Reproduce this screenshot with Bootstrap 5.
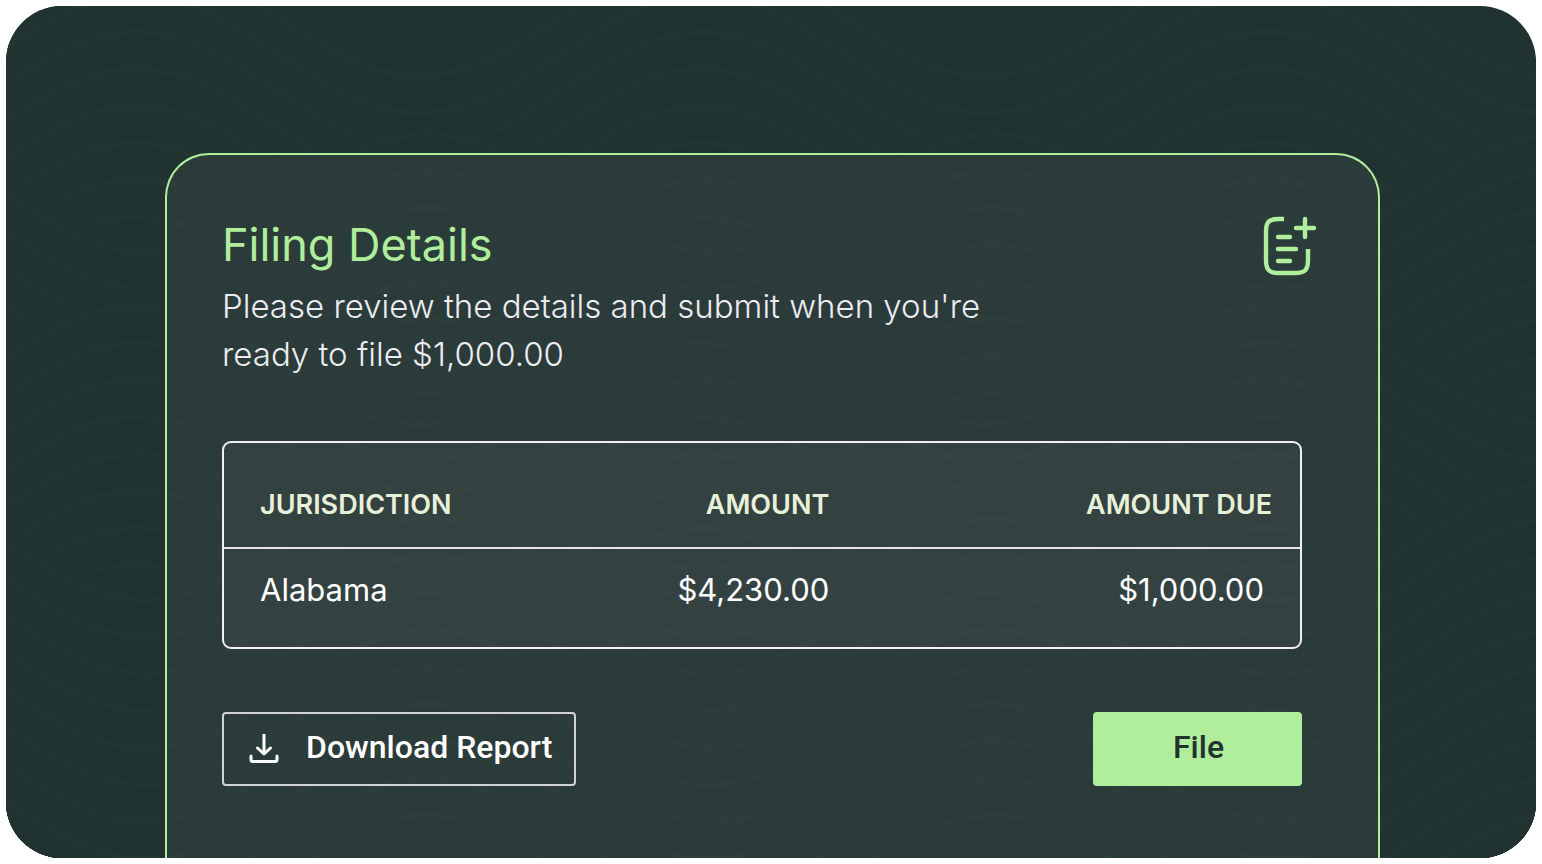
<!DOCTYPE html>
<html lang="en">
<head>
<meta charset="utf-8">
<meta name="viewport" content="width=device-width, initial-scale=1">
<title>Filing Details</title>
<link rel="stylesheet" href="https://cdn.jsdelivr.net/npm/bootstrap@5.3.0/dist/css/bootstrap.min.css">
<style>
  :root { --mint: #b0ee9c; --pine: #213331; }
  body { background: #fff; font-family: Inter, sans-serif; color: #fff; }
  .stage { min-height: calc(100vh - 12px); margin: 6px; padding: 147px 156px 0 159px; border-radius: 56px; background: var(--pine); }
  .waves { inset: 0; }
  .waves .ground { fill: var(--pine); }
  .waves .lines { fill: none; stroke: #233533; stroke-width: 7; }
  .filing { background: rgba(108, 112, 111, .14); border: 2px solid var(--mint); border-bottom: 0; border-radius: 44px 44px 0 0; }
  .filing-head { padding: 59px 60px 0 55px; }
  .filing-main { padding: 63px 76px 64px 55px; }
  .filing-title { margin-bottom: 6px; font-size: 45px; line-height: 62px; color: var(--mint); }
  .filing-note { max-width: 780px; font-size: 33px; line-height: 48px; font-weight: 300; color: #ececf2; }
  .frame { border: 2px solid #f1eff5; border-radius: 9px; background: rgba(255, 255, 255, .04); }
  .sums { table-layout: fixed; }
  .sums th, .sums td { padding: 0 8px 0 36px; }
  .sums th { padding-top: 45px; padding-bottom: 25px; border-bottom: 2px solid #e6e3ec; font-size: 27px; line-height: 34px; font-weight: 600; color: #e9f0da; }
  .sums td { padding-top: 21px; padding-bottom: 37px; font-size: 31px; line-height: 40px; }
  .sums th:last-child { padding-right: 28px; }
  .sums td:last-child { padding-right: 36px; }
  .col-place { width: 28%; }
  .col-sum { width: 29%; }
  .actions { margin-top: 63px; }
  .act { --bs-btn-border-radius: 4px; --bs-btn-border-width: 2px; height: 74px; padding: 0 22px 4px 24px; font-family: Roboto, sans-serif; font-size: 32px; line-height: 40px; font-weight: 500; }
  .act-download { --bs-btn-color: #fff; --bs-btn-border-color: #d0d2d8; --bs-btn-hover-color: #fff; --bs-btn-hover-border-color: #fff; gap: 26px; }
  .act-file { --bs-btn-color: var(--pine); --bs-btn-bg: var(--mint); --bs-btn-border-color: var(--mint); --bs-btn-hover-bg: #c1f5b0; min-width: 209px; }
  @media (max-width: 1100px) {
    .stage { padding: 48px 24px 0; }
    .filing-head, .filing-main { padding-left: 24px; padding-right: 24px; }
    .sums th, .sums td { padding-left: 12px; }
  }
</style>
</head>
<body>
<main class="stage position-relative overflow-hidden d-flex flex-column">
  <svg class="waves position-absolute w-100 h-100" viewBox="6 6 1530 852" preserveAspectRatio="xMidYMid slice" aria-hidden="true">
    <defs>
      <!-- one wave line, crest at x=137, repeated every 565 -->
      <path id="wave" d="M-428 0C-325 0-248 118-145 118S34 0 137 0S317 118 420 118S599 0 702 0S882 118 985 118S1164 0 1267 0S1447 118 1550 118S1729 0 1832 0"/>
      <g id="band">
        <path class="ground" d="M-428-18C-325-18-248 100-145 100S34-18 137-18S317 100 420 100S599-18 702-18S882 100 985 100S1164-18 1267-18S1447 100 1550 100S1729-18 1832-18V900H-428Z"/>
        <g class="lines">
          <use href="#wave"/><use href="#wave" y="37"/><use href="#wave" y="74"/><use href="#wave" y="111"/>
          <use href="#wave" y="148"/><use href="#wave" y="185"/><use href="#wave" y="222"/><use href="#wave" y="259"/>
        </g>
      </g>
    </defs>
    <use href="#band" y="-42"/>
    <use href="#band" x="-274" y="134"/><use href="#band" x="291" y="134"/>
    <use href="#band" y="306"/>
    <use href="#band" x="-274" y="482"/><use href="#band" x="291" y="482"/>
    <g class="lines">
      <use href="#wave" x="-274" y="778"/><use href="#wave" x="291" y="778"/>
      <use href="#wave" x="-274" y="815"/><use href="#wave" x="291" y="815"/>
    </g>
  </svg>

  <section class="filing position-relative flex-grow-1" aria-labelledby="filing-title">
    <header class="filing-head d-flex justify-content-between align-items-start">
      <div>
        <h1 class="filing-title fw-normal" id="filing-title">Filing Details</h1>
        <p class="filing-note mb-0">Please review the details and submit when you're ready to file $1,000.00</p>
      </div>
      <svg class="flex-shrink-0" width="56" height="64" viewBox="0 0 56 64" fill="none" stroke="#b0ee9c" stroke-width="4.4" aria-hidden="true">
        <path d="M22 5H17C7 5 4 8 4 17V46C4 56 7 59 17 59H33C43 59 46 56 46 46V35"/>
        <path stroke-linecap="round" d="M16 23H28M16 35H34M16 47H28M43 5V23M34 14H52"/>
      </svg>
    </header>
    <div class="filing-main">
      <div class="frame overflow-hidden">
        <table class="sums w-100">
          <colgroup><col class="col-place"><col class="col-sum"><col></colgroup>
          <thead><tr><th scope="col">JURISDICTION</th><th scope="col" class="text-end">AMOUNT</th><th scope="col" class="text-end">AMOUNT DUE</th></tr></thead>
          <tbody><tr><td>Alabama</td><td class="text-end">$4,230.00</td><td class="text-end">$1,000.00</td></tr></tbody>
        </table>
      </div>
      <div class="actions d-flex flex-wrap justify-content-between gap-3">
        <button type="button" class="btn act act-download d-flex align-items-center">
          <svg width="32" height="32" viewBox="0 0 32 32" fill="none" stroke="currentColor" stroke-width="3" aria-hidden="true">
            <path d="M16 3V23"/>
            <path stroke-linecap="round" stroke-linejoin="round" d="M9.500 17L16 23L22.500 17M3 25V28.500Q3 30.500 5 30.500H27Q29 30.500 29 28.500V25"/>
          </svg>
          Download Report
        </button>
        <button type="button" class="btn act act-file">File</button>
      </div>
    </div>
  </section>
</main>
<script src="https://cdn.jsdelivr.net/npm/bootstrap@5.3.0/dist/js/bootstrap.bundle.min.js"></script>
</body>
</html>
